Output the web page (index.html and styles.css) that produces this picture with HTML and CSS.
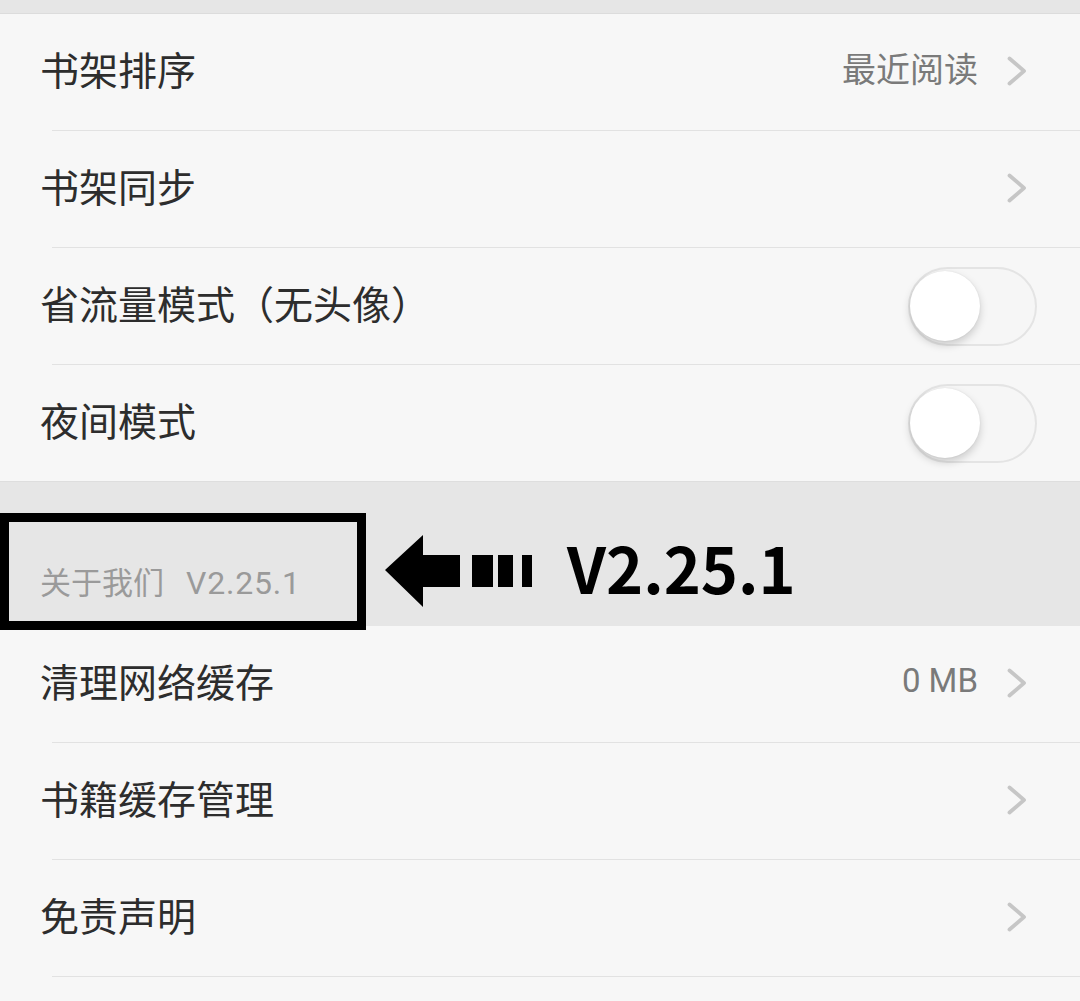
FILE: index.html
```html
<!DOCTYPE html>
<html lang="zh">
<head>
<meta charset="utf-8">
<link rel="stylesheet" href="styles.css">
</head>
<body>
<div class="screen">
  <div class="topband"></div>
  <div class="group">
    <div class="row"><span class="label">书架排序</span><span class="value">最近阅读</span><svg class="chev" viewBox="0 0 20 30"><path d="M2.5 2.5 L17 15 L2.5 27.5" /></svg></div>
    <div class="sep"></div>
    <div class="row"><span class="label">书架同步</span><svg class="chev" viewBox="0 0 20 30"><path d="M2.5 2.5 L17 15 L2.5 27.5" /></svg></div>
    <div class="sep"></div>
    <div class="row"><span class="label">省流量模式（无头像）</span><span class="toggle"><span class="knob"></span></span></div>
    <div class="sep"></div>
    <div class="row"><span class="label">夜间模式</span><span class="toggle"><span class="knob"></span></span></div>
  </div>
  <div class="section">
    <span class="section-label">关于我们<span class="ver">V2.25.1</span></span>
    <div class="annot-box"></div>
    <svg class="annot-arrow" viewBox="0 0 150 74">
      <path d="M0 35 L38 0 L38 20 L75 20 L75 52 L38 52 L38 72 Z" />
      <rect x="87" y="20" width="21" height="32" />
      <rect x="113" y="20" width="15" height="32" />
      <rect x="137" y="20" width="10" height="32" />
    </svg>
    <span class="annot-text">V2.25.1</span>
  </div>
  <div class="group">
    <div class="row"><span class="label">清理网络缓存</span><span class="value latin">0 MB</span><svg class="chev" viewBox="0 0 20 30"><path d="M2.5 2.5 L17 15 L2.5 27.5" /></svg></div>
    <div class="sep"></div>
    <div class="row"><span class="label">书籍缓存管理</span><svg class="chev" viewBox="0 0 20 30"><path d="M2.5 2.5 L17 15 L2.5 27.5" /></svg></div>
    <div class="sep"></div>
    <div class="row"><span class="label">免责声明</span><svg class="chev" viewBox="0 0 20 30"><path d="M2.5 2.5 L17 15 L2.5 27.5" /></svg></div>
    <div class="sep"></div>
    <div class="row"></div>
  </div>
</div>
</body>
</html>
```

FILE: styles.css
```css
html, body {
  margin: 0;
  padding: 0;
  background: #f7f7f7;
}
.screen {
  width: 1080px;
  height: 1001px;
  overflow: hidden;
  position: relative;
  font-family: "Noto Sans CJK SC", "Noto Sans", sans-serif;
  background: #f7f7f7;
}
.topband {
  height: 13px;
  background: #e6e6e6;
  border-bottom: 1px solid #dcdcdc;
}
.group {
  display: flex;
  flex-direction: column;
}
.row {
  height: 116px;
  display: flex;
  align-items: center;
  padding: 0 53px 8px 40px;
  box-sizing: border-box;
  flex-shrink: 0;
}
.label {
  font-size: 39px;
  color: #2d2d2d;
  flex: 1;
  line-height: 1;
}
.value {
  font-size: 34px;
  color: #7a7a7a;
  margin-right: 29px;
  line-height: 1;
}
.value.latin {
  font-family: Roboto, "Noto Sans CJK SC", sans-serif;
  font-size: 33px;
}
.chev {
  width: 20px;
  height: 30px;
  margin-top: 6px;
}
.chev path {
  fill: none;
  stroke: #c6c6c6;
  stroke-width: 3.8;
  stroke-linecap: round;
  stroke-linejoin: round;
}
.sep {
  height: 1px;
  background: #e2e2e2;
  margin-left: 52px;
}
.toggle {
  width: 125px;
  height: 75px;
  border: 2px solid #e4e4e4;
  border-radius: 40px;
  background: #f6f6f6;
  display: flex;
  align-items: center;
  margin-right: -10px;
  margin-top: 8px;
  box-sizing: content-box;
}
.knob {
  width: 70px;
  height: 70px;
  border-radius: 50%;
  background: #ffffff;
  box-shadow: 0 4px 8px rgba(0,0,0,0.18), 0 0 2px rgba(0,0,0,0.08);
}
.section {
  height: 145px;
  background: #e6e6e6;
  border-top: 1px solid #dedede;
  display: flex;
  align-items: flex-end;
  padding: 0 0 27px 40px;
  box-sizing: border-box;
  position: relative;
}
.section-label {
  font-family: Roboto, "Noto Sans CJK SC", sans-serif;
  font-size: 31px;
  color: #9a9a9a;
  line-height: 1;
}
.ver {
  margin-left: 22px;
  letter-spacing: 0.8px;
  font-size: 32px;
}
.annot-box {
  position: absolute;
  left: 0;
  top: 31px;
  width: 366px;
  height: 117px;
  border: 9px solid #000;
  box-sizing: border-box;
  z-index: 2;
}
.annot-arrow {
  position: absolute;
  left: 385px;
  top: 53px;
  width: 150px;
  height: 74px;
}
.annot-arrow path, .annot-arrow rect {
  fill: #000;
}
.annot-text {
  position: absolute;
  left: 567px;
  top: 44px;
  font-size: 63px;
  font-weight: 700;
  color: #000;
  line-height: 1.3;
}
```
